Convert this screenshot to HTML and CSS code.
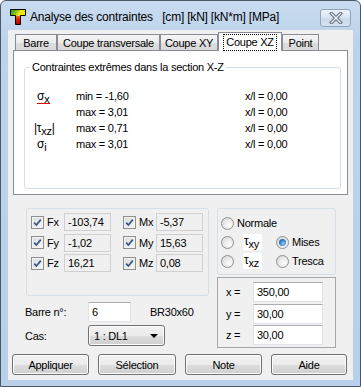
FILE: index.html
```html
<!DOCTYPE html>
<html lang="fr">
<head>
<meta charset="utf-8">
<title>Analyse des contraintes</title>
<link rel="stylesheet" href="styles.css">
</head>
<body>
<div class="window">
  <div class="titlebar">
    <svg class="app-icon" width="16" height="16" viewBox="0 0 16 16">
      <defs>
        <linearGradient id="tbar" x1="0" y1="0" x2="1" y2="0.3">
          <stop offset="0" stop-color="#1f9a1f"/>
          <stop offset="0.45" stop-color="#7cc010"/>
          <stop offset="0.7" stop-color="#ecea10"/>
          <stop offset="1" stop-color="#f3e000"/>
        </linearGradient>
        <linearGradient id="tstem" x1="0" y1="0" x2="0" y2="1">
          <stop offset="0" stop-color="#f08000"/>
          <stop offset="0.4" stop-color="#e02000"/>
          <stop offset="1" stop-color="#b00000"/>
        </linearGradient>
      </defs>
      <path d="M5.5 6.5 H10.5 V15.5 H5.5 Z" fill="url(#tstem)"/>
      <path d="M0.5 0.5 H15.5 V6.5 H0.5 Z" fill="url(#tbar)"/>
      <path d="M0.5 0.5 H15.5 V6.5 H10.5 V15.5 H5.5 V6.5 H0.5 Z" fill="none" stroke="#000" stroke-width="1"/>
    </svg>
    <span class="title">Analyse des contraintes&nbsp;&nbsp; [cm] [kN] [kN*m] [MPa]</span>
    <div class="close">
      <svg width="14" height="12" viewBox="0 0 14 12">
        <path d="M2.5 1.5 L11.5 10.5 M11.5 1.5 L2.5 10.5" stroke="#5d6b7d" stroke-width="3.4" stroke-linecap="square"/>
        <path d="M2.5 1.5 L11.5 10.5 M11.5 1.5 L2.5 10.5" stroke="#eef2f7" stroke-width="1.4" stroke-linecap="square"/>
      </svg>
    </div>
  </div>

  <div class="client">
    <div class="tabs">
      <div class="tab tab-barre">Barre</div>
      <div class="tab tab-ct">Coupe transversale</div>
      <div class="tab tab-cxy">Coupe XY</div>
      <div class="tab tab-cxz active"><span class="focus">Coupe XZ</span></div>
      <div class="tab tab-point">Point</div>
    </div>
    <div class="panel">
      <div class="group extremes">
        <div class="group-title">Contraintes extrêmes dans la section X-Z</div>
        <div class="stress-grid">
          <span class="sym"><span class="sel">σ<sub>x</sub></span></span><span>min = -1,60</span><span>x/l = 0,00</span>
          <span class="sym"></span><span>max = 3,01</span><span>x/l = 0,00</span>
          <span class="sym abs">|τ<sub>xz</sub>|</span><span>max = 0,71</span><span>x/l = 0,00</span>
          <span class="sym"><span class="plain">σ<sub>i</sub></span></span><span>max = 3,01</span><span>x/l = 0,00</span>
        </div>
      </div>
    </div>

    <div class="lower">
      <div class="left-col">
        <div class="group forces">
          <span class="cb"><svg viewBox="0 0 11 11"><path d="M2.2 5.6 L4.4 8 L8.8 2.6"/></svg></span><span class="flab">Fx</span><span class="val">-103,74</span><span></span>
          <span class="cb"><svg viewBox="0 0 11 11"><path d="M2.2 5.6 L4.4 8 L8.8 2.6"/></svg></span><span class="flab">Mx</span><span class="val">-5,37</span>
          <span class="cb"><svg viewBox="0 0 11 11"><path d="M2.2 5.6 L4.4 8 L8.8 2.6"/></svg></span><span class="flab">Fy</span><span class="val">-1,02</span><span></span>
          <span class="cb"><svg viewBox="0 0 11 11"><path d="M2.2 5.6 L4.4 8 L8.8 2.6"/></svg></span><span class="flab">My</span><span class="val">15,63</span>
          <span class="cb"><svg viewBox="0 0 11 11"><path d="M2.2 5.6 L4.4 8 L8.8 2.6"/></svg></span><span class="flab">Fz</span><span class="val">16,21</span><span></span>
          <span class="cb"><svg viewBox="0 0 11 11"><path d="M2.2 5.6 L4.4 8 L8.8 2.6"/></svg></span><span class="flab">Mz</span><span class="val">0,08</span>
        </div>
        <div class="field-row barre-row">
          <span class="flabel">Barre n°:</span>
          <span class="edit barre-edit">6</span>
          <span class="section-name">BR30x60</span>
        </div>
        <div class="field-row cas-row">
          <span class="flabel">Cas:</span>
          <span class="combo"><span class="combo-text">1 : DL1</span><span class="arrow"></span></span>
        </div>
      </div>

      <div class="right-col">
        <div class="group radios">
          <div class="radio-line"><span class="rb"></span><span class="rlab">Normale</span></div>
          <div class="radio-line two">
            <span class="opt"><span class="rb"></span><span class="tau">τ<sub>xy</sub></span></span>
            <span class="opt"><span class="rb on"><span class="dot"></span></span><span class="rlab">Mises</span></span>
          </div>
          <div class="radio-line two">
            <span class="opt"><span class="rb"></span><span class="tau">τ<sub>xz</sub></span></span>
            <span class="opt"><span class="rb"></span><span class="rlab">Tresca</span></span>
          </div>
        </div>
        <div class="coords">
          <span class="clab">x =</span><span class="edit cedit">350,00</span>
          <span class="clab">y =</span><span class="edit cedit">30,00</span>
          <span class="clab">z =</span><span class="edit cedit">30,00</span>
        </div>
      </div>
    </div>

    <div class="buttons">
      <span class="btn b1">Appliquer</span>
      <span class="btn b2">Sélection</span>
      <span class="btn b3">Note</span>
      <span class="btn b4">Aide</span>
    </div>
  </div>
</div>
</body>
</html>
```

FILE: styles.css
```css
* { box-sizing: border-box; }

body {
  margin: 0;
  background: #ffffff;
  font-family: "Liberation Sans", Arial, sans-serif;
  font-size: 11px;
  color: #000;
  letter-spacing: -0.25px;
}

.window {
  width: 361px;
  height: 387px;
  border: 1px solid #4c5866;
  border-radius: 6px 6px 0 0;
  background: linear-gradient(#c9dbef 0px, #bdd3eb 40px, #b9d0ea 100%);
  display: flex;
  flex-direction: column;
  overflow: hidden;
}

/* ---------- title bar ---------- */
.titlebar {
  height: 29px;
  padding: 3px 0 0 9px;
  display: flex;
  align-items: center;
}

.app-icon { flex: none; }

.title {
  margin-left: 4px;
  font-size: 12px;
  letter-spacing: -0.2px;
  white-space: nowrap;
}

.close {
  margin-left: auto;
  margin-right: 9px;
  margin-top: 1px;
  width: 31px;
  height: 18px;
  border: 1px solid #8ea3bd;
  border-radius: 3px;
  background: linear-gradient(#eef3fa, #d9e4f1 50%, #cbd9ea 51%, #d6e2f0);
  display: flex;
  align-items: center;
  justify-content: center;
}

/* ---------- client area ---------- */
.client {
  margin-left: 7px;
  width: 345px;
  height: 350px;
  background: #f0f0f0;
  display: flex;
  flex-direction: column;
}

.tabs {
  margin-top: 2px;
  margin-left: 7px;
  height: 18px;
  display: flex;
  align-items: flex-end;
}

.tab {
  height: 16px;
  border: 1px solid #898c95;
  border-bottom: none;
  background: linear-gradient(#f5f5f5, #ebebeb 50%, #dddddd 51%, #d9d9d9);
  display: flex;
  align-items: center;
  justify-content: center;
  padding-top: 1px;
  white-space: nowrap;
}

.tab-barre { width: 42px; }
.tab-ct { width: 103px; }
.tab-cxy { width: 58px; }
.tab-cxz { width: 64px; }
.tab-point { width: 37px; }

.tab.active {
  height: 19px;
  margin-bottom: -1px;
  background: #ffffff;
  position: relative;
  z-index: 1;
  padding-top: 0;
}

.focus {
  border: 1px dotted #000;
  padding: 1px 2px 1px 2px;
  line-height: 13px;
}

.panel {
  margin-left: 5px;
  width: 335px;
  height: 145px;
  border: 1px solid #898c95;
  background: #ffffff;
  padding: 16px 6px 0 10px;
}

.group {
  border: 1px solid #d5dfe5;
  border-radius: 3px;
}

.extremes {
  height: 122px;
}

.group-title {
  margin: -7px 0 0 5px;
  padding: 0 2px;
  width: fit-content;
  line-height: 13px;
  background: #ffffff;
}

.stress-grid {
  margin-top: 14px;
  padding-left: 9px;
  display: grid;
  grid-template-columns: 42px 169px auto;
  grid-auto-rows: 16px;
  line-height: 16px;
  white-space: nowrap;
}

.sym { font-size: 12px; }
.sym sub, .tau sub {
  font-size: 11px;
  vertical-align: -3px;
  line-height: 0;
}

.sel {
  margin-left: 3px;
  display: inline-block;
  line-height: 14px;
  border-bottom: 1px solid #e00000;
  padding-right: 1px;
}

.plain { margin-left: 3px; }

/* ---------- lower part ---------- */
.lower {
  display: flex;
  height: 153px;
}

.left-col {
  margin-left: 18px;
  width: 183px;
  display: flex;
  flex-direction: column;
}

.forces {
  margin-top: 13px;
  height: 88px;
  display: grid;
  grid-template-columns: 13px 20px 47px 12px 13px 20px 47px;
  grid-auto-rows: 18px;
  row-gap: 2.5px;
  align-items: center;
  padding: 4px 0 0 4px;
}

.cb {
  width: 13px;
  height: 13px;
  border: 1px solid #8e8f8f;
  background: linear-gradient(135deg, #d9dbde, #f7f7f7);
  box-shadow: inset 0 0 0 1px #f2f2f2;
  display: flex;
}

.cb svg {
  width: 11px;
  height: 11px;
  fill: none;
  stroke: #3b5683;
  stroke-width: 1.7;
}

.flab { padding-left: 3px; }

.val {
  height: 18px;
  border: 1px solid #d0d0d0;
  background: #f0f0f0;
  padding-left: 3px;
  line-height: 16px;
  white-space: nowrap;
}

.field-row {
  display: flex;
  align-items: center;
}

.flabel {
  margin-left: -1px;
  width: 63px;
}

.barre-row { margin-top: 6px; height: 20px; }
.cas-row { margin-top: 3px; height: 21px; }

.edit {
  height: 20px;
  background: #ffffff;
  border: 1px solid #e2e3ea;
  border-top-color: #abadb3;
  padding-left: 3px;
  line-height: 18px;
}

.barre-edit { width: 43px; }

.section-name { margin-left: 19px; }

.combo {
  width: 77px;
  height: 21px;
  border: 1px solid #707070;
  border-radius: 3px;
  background: linear-gradient(#f2f2f2, #ebebeb 50%, #dddddd 51%, #cfcfcf);
  box-shadow: inset 0 0 0 1px #fcfcfc;
  display: flex;
  align-items: center;
  padding: 0 3px 0 5px;
}

.combo-text { flex: 1; }

.arrow {
  width: 0;
  height: 0;
  border-left: 4px solid transparent;
  border-right: 4px solid transparent;
  border-top: 4px solid #000;
  margin-right: 3px;
}

.right-col {
  margin-left: 8px;
  width: 119px;
  display: flex;
  flex-direction: column;
}

.radios {
  margin-top: 13px;
  height: 67px;
  padding: 6px 0 0 3px;
  display: flex;
  flex-direction: column;
  gap: 3px;
}

.radio-line {
  height: 16px;
  display: flex;
  align-items: center;
}

.opt {
  display: flex;
  align-items: center;
  width: 55px;
}

.rb {
  flex: none;
  width: 13px;
  height: 13px;
  border-radius: 50%;
  border: 1px solid #8e8f8f;
  background: radial-gradient(circle at 65% 65%, #fdfdfd, #e6e6e6 55%, #cfcfcf);
  display: flex;
  align-items: center;
  justify-content: center;
}

.dot {
  width: 7px;
  height: 7px;
  border-radius: 50%;
  background: radial-gradient(circle at 60% 65%, #8fd0ff, #2f7fc7 55%, #0d3f7a);
}

.rlab { margin-left: 3px; }

.tau {
  margin-left: 9px;
  width: 19px;
  height: 16px;
  background: #ffffff;
  font-size: 12px;
  line-height: 14px;
  padding-left: 1px;
  white-space: nowrap;
}

.coords {
  margin-top: 2px;
  height: 71px;
  border: 1px solid #a7a7a7;
  padding: 4px 0 0 8px;
  display: grid;
  grid-template-columns: 27px 70px;
  grid-auto-rows: 20px;
  row-gap: 1.5px;
  align-items: center;
}

.cedit { width: 70px; }

/* ---------- buttons ---------- */
.buttons {
  margin-top: 6px;
  margin-left: 4px;
  display: flex;
  gap: 9px;
}

.btn {
  height: 21px;
  border: 1px solid #707070;
  border-radius: 3px;
  background: linear-gradient(#f2f2f2, #ebebeb 50%, #dddddd 51%, #cfcfcf);
  box-shadow: inset 0 0 0 1px #fcfcfc;
  display: flex;
  align-items: center;
  justify-content: center;
}

.b1 { width: 77px; }
.b2 { width: 78px; }
.b3 { width: 77px; }
.b4 { width: 76px; }
```
